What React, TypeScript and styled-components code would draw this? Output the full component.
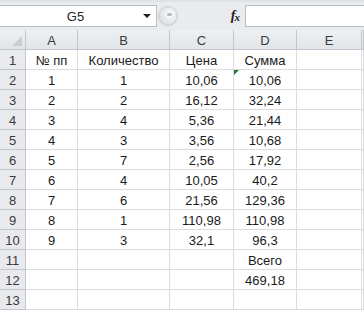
import React from "react";
import styled, { createGlobalStyle } from "styled-components";

const Global = createGlobalStyle`
  html, body { margin: 0; padding: 0; background: #ffffff; overflow: hidden; }
  body { font-family: "Liberation Sans", Arial, sans-serif; }
`;

const Page = styled.div`
  width: 364px;
  height: 310px;
  overflow: hidden;
  background: #ffffff;
`;

const FormulaBar = styled.div`
  height: 30px;
  box-sizing: border-box;
  padding: 3px 0 3px 0;
  display: flex;
  align-items: stretch;
  background: #e9ebee;
  border-top: 2px solid #dfe3e8;
`;

const NameBox = styled.div`
  width: 157px;
  box-sizing: border-box;
  background: #fff;
  border: 1px solid #b9bec6;
  border-left: none;
  display: flex;
  align-items: center;
  position: relative;
  font-size: 13px;
  color: #222;
`;

const NameText = styled.span`
  flex: 1;
  text-align: center;
  padding-left: 8px;
`;

const DropArrow = styled.span`
  width: 0;
  height: 0;
  border-left: 4px solid transparent;
  border-right: 4px solid transparent;
  border-top: 4px solid #222;
  margin-right: 5px;
`;

const Middle = styled.div`
  width: 88px;
  display: flex;
  align-items: center;
  justify-content: space-between;
  padding-right: 6px;
  box-sizing: border-box;
`;

const Grip = styled.div`
  width: 20px;
  height: 20px;
  margin-left: 1px;
  border-radius: 50%;
  background: radial-gradient(circle at 60% 40%, #ffffff 0%, #e6e8eb 45%, #cfd3d8 100%);
  border: 1px solid #c8ccd2;
  box-sizing: border-box;
  display: flex;
  align-items: center;
  justify-content: center;
`;

const GripDot = styled.span`
  width: 5px;
  height: 3px;
  border-radius: 2px;
  background: #b5b9bf;
  margin-top: -3px;
  margin-left: 2px;
`;

const Fx = styled.span`
  font-family: "Liberation Serif", "Times New Roman", serif;
  font-style: italic;
  font-weight: bold;
  font-size: 14px;
  color: #222;
  letter-spacing: -1px;
`;

const FxSub = styled.span`
  font-size: 11px;
  position: relative;
  top: 1px;
`;

const FormulaInput = styled.div`
  flex: 1;
  background: #fff;
  border: 1px solid #b9bec6;
  border-right: none;
`;

const Grid = styled.div`
  display: grid;
  grid-template-columns: 26px 52px 92px 64px 63px 65px 1fr;
  grid-auto-rows: 20px;
  font-size: 13px;
  color: #1a1a1a;
`;

const Cell = styled.div<{ $kind?: "corner" | "col" | "row" | "data" }>`
  box-sizing: border-box;
  border-right: 1px solid ${(p) => (p.$kind === "data" || !p.$kind ? "#dadcdf" : "#c3c7cd")};
  border-bottom: 1px solid ${(p) => (p.$kind === "data" || !p.$kind ? "#dadcdf" : "#c3c7cd")};
  background: ${(p) =>
    p.$kind === "col" || p.$kind === "corner"
      ? "linear-gradient(#eef0f3, #e1e4e8)"
      : p.$kind === "row"
      ? "#e8eaed"
      : "#ffffff"};
  color: ${(p) => (p.$kind === "data" ? "#1a1a1a" : "#3a3a3a")};
  display: flex;
  align-items: center;
  justify-content: center;
  padding-top: 2px;
  white-space: nowrap;
  position: relative;
  overflow: visible;
`;

const CornerMark = styled.span`
  position: absolute;
  right: 3px;
  bottom: 3px;
  width: 0;
  height: 0;
  border-left: 10px solid transparent;
  border-bottom: 10px solid #c9ccd1;
`;

const ErrorMark = styled.span`
  position: absolute;
  left: 0;
  top: 0;
  width: 0;
  height: 0;
  border-top: 5px solid #1e7a34;
  border-right: 5px solid transparent;
`;

const cols = ["A", "B", "C", "D", "E", ""];

const rows: string[][] = [
  ["№ пп", "Количество", "Цена", "Сумма", "", ""],
  ["1", "1", "10,06", "10,06", "", ""],
  ["2", "2", "16,12", "32,24", "", ""],
  ["3", "4", "5,36", "21,44", "", ""],
  ["4", "3", "3,56", "10,68", "", ""],
  ["5", "7", "2,56", "17,92", "", ""],
  ["6", "4", "10,05", "40,2", "", ""],
  ["7", "6", "21,56", "129,36", "", ""],
  ["8", "1", "110,98", "110,98", "", ""],
  ["9", "3", "32,1", "96,3", "", ""],
  ["", "", "", "Всего", "", ""],
  ["", "", "", "469,18", "", ""],
  ["", "", "", "", "", ""],
];

export default function App() {
  return (
    <Page>
      <Global />
      <FormulaBar>
        <NameBox>
          <NameText>G5</NameText>
          <DropArrow />
        </NameBox>
        <Middle>
          <Grip>
            <GripDot />
          </Grip>
          <Fx>
            f<FxSub>x</FxSub>
          </Fx>
        </Middle>
        <FormulaInput />
      </FormulaBar>
      <Grid>
        <Cell $kind="corner">
          <CornerMark />
        </Cell>
        {cols.map((c, i) => (
          <Cell key={"h" + i} $kind="col">
            {c}
          </Cell>
        ))}
        {rows.map((r, ri) => (
          <React.Fragment key={ri}>
            <Cell $kind="row">{ri + 1}</Cell>
            {r.map((v, ci) => (
              <Cell key={ci} $kind="data">
                {ri === 1 && ci === 3 && <ErrorMark />}
                {v}
              </Cell>
            ))}
          </React.Fragment>
        ))}
      </Grid>
    </Page>
  );
}
